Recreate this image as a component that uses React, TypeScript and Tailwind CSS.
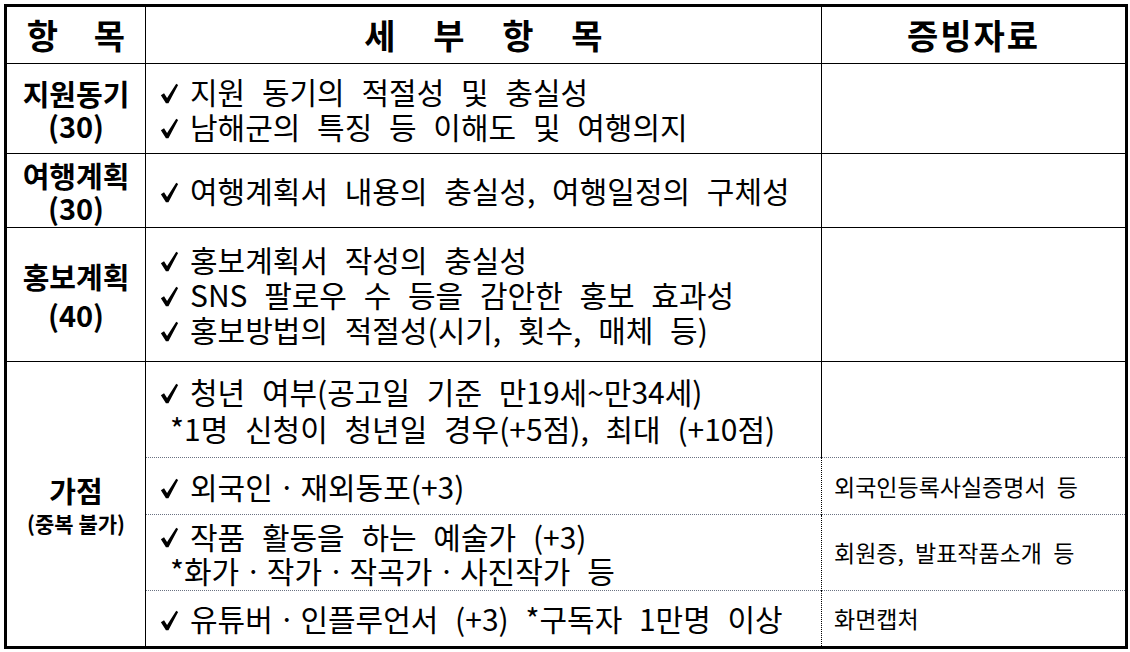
import React from 'react'

const font = { fontFamily: '"Noto Sans CJK KR", "Noto Sans", sans-serif' }

function Tick() {
  return (
    <svg viewBox="0 0 18 20" className="w-[19px] h-[21px]" aria-hidden="true">
      <path d="M0.8 11.6 L3.8 9.8 L6.7 14.2 L15.4 0.8 L17.2 1.8 L8 19.2 L5.6 19.2 Z" fill="black" />
    </svg>
  )
}

function Check({ children }: { children: React.ReactNode }) {
  return (
    <div className="flex items-center">
      <span className="w-[30px] shrink-0 flex items-center pt-[4px]">
        <Tick />
      </span>
      <span className="[word-spacing:10px]">{children}</span>
    </div>
  )
}

function Note({ children }: { children: React.ReactNode }) {
  return <div className="pl-[10px] [word-spacing:10px]">{children}</div>
}

export default function App() {
  const cell = 'border border-black align-middle'
  const dotTop = 'border-t border-dotted border-t-gray-500'
  const side = 'pl-[12px] text-[23px] [word-spacing:6px]'

  return (
    <div className="bg-white w-[1130px] h-[652px] p-[4px] text-black" style={font}>
      <table className="table-fixed border-collapse border-[3px] border-black w-[1121px]">
        <colgroup>
          <col className="w-[140px]" />
          <col className="w-[676px]" />
          <col className="w-[305px]" />
        </colgroup>
        <thead>
          <tr className="h-[58px]">
            <th className={`${cell} text-[34px] font-bold leading-[40px]`}>
              <span className="[word-spacing:28px]">항 목</span>
            </th>
            <th className={`${cell} text-[34px] font-bold leading-[40px]`}>
              <span className="[word-spacing:30px]">세 부 항 목</span>
            </th>
            <th className={`${cell} text-[34px] font-bold leading-[40px] tracking-[2px]`}>
              증빙자료
            </th>
          </tr>
        </thead>
        <tbody className="text-[30px] leading-[35px]">
          <tr className="h-[90px]">
            <td className={`${cell} text-center font-bold text-[29px] leading-[32px]`}>
              <div>지원동기</div>
              <div>(30)</div>
            </td>
            <td className={`${cell} pl-[14px]`}>
              <Check>지원 동기의 적절성 및 충실성</Check>
              <Check>남해군의 특징 등 이해도 및 여행의지</Check>
            </td>
            <td className={cell}></td>
          </tr>
          <tr className="h-[74px]">
            <td className={`${cell} text-center font-bold text-[29px] leading-[32px]`}>
              <div>여행계획</div>
              <div>(30)</div>
            </td>
            <td className={`${cell} pl-[14px]`}>
              <Check>여행계획서 내용의 충실성, 여행일정의 구체성</Check>
            </td>
            <td className={cell}></td>
          </tr>
          <tr className="h-[134px]">
            <td className={`${cell} text-center font-bold text-[29px] leading-[38px]`}>
              <div>홍보계획</div>
              <div>(40)</div>
            </td>
            <td className={`${cell} pl-[14px]`}>
              <Check>홍보계획서 작성의 충실성</Check>
              <Check>SNS 팔로우 수 등을 감안한 홍보 효과성</Check>
              <Check>홍보방법의 적절성(시기, 횟수, 매체 등)</Check>
            </td>
            <td className={cell}></td>
          </tr>
          <tr className="h-[96px]">
            <td rowSpan={4} className={`${cell} text-center font-bold`}>
              <div className="text-[29px] leading-[38px]">가점</div>
              <div className="text-[21px] leading-[28px]">(중복 불가)</div>
            </td>
            <td className={`${cell} pl-[14px] border-b-0 leading-[37px]`}>
              <Check>청년 여부(공고일 기준 만19세~만34세)</Check>
              <Note>*1명 신청이 청년일 경우(+5점), 최대 (+10점)</Note>
            </td>
            <td className={`${cell} border-b-0`}></td>
          </tr>
          <tr className="h-[57px]">
            <td className={`${cell} ${dotTop} border-b-0 pl-[14px]`}>
              <Check>외국인ㆍ재외동포(+3)</Check>
            </td>
            <td className={`${cell} ${dotTop} border-b-0 ${side}`}>외국인등록사실증명서 등</td>
          </tr>
          <tr className="h-[76px]">
            <td className={`${cell} ${dotTop} border-b-0 pl-[14px] leading-[34px]`}>
              <Check>작품 활동을 하는 예술가 (+3)</Check>
              <Note>*화가ㆍ작가ㆍ작곡가ㆍ사진작가 등</Note>
            </td>
            <td className={`${cell} ${dotTop} border-b-0 ${side}`}>회원증, 발표작품소개 등</td>
          </tr>
          <tr className="h-[57px]">
            <td className={`${cell} ${dotTop} pl-[14px]`}>
              <Check>유튜버ㆍ인플루언서 (+3) *구독자 1만명 이상</Check>
            </td>
            <td className={`${cell} ${dotTop} ${side}`}>화면캡처</td>
          </tr>
        </tbody>
      </table>
    </div>
  )
}
